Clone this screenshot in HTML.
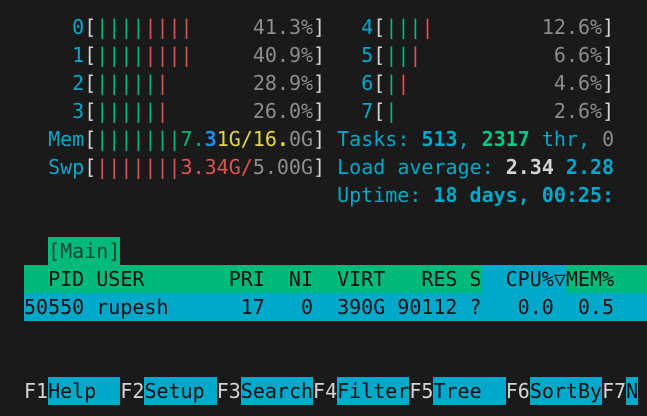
<!DOCTYPE html>
<html><head><meta charset="utf-8"><style>
html,body{margin:0;padding:0;background:#1a1a1a;width:647px;height:416px;overflow:hidden}
pre{margin:0;position:absolute;left:24px;top:13px;width:623px;overflow:hidden;font-family:"DejaVu Sans Mono","Liberation Mono",monospace;font-size:20px;line-height:28px;color:#d0d0d0;white-space:pre}
.c{color:#00a9c9}.g{color:#00b97a}.r{color:#e05252}.d{color:#8c8c8c}.w{color:#d4d4d4}.y{color:#e6d63a}.b{color:#1a90e8}.B{font-weight:bold}
.hg{background:#00b97c;color:#111}.hc{background:#00a9c9;color:#111}.tab{background:#00b97c;color:#0d4a30;display:inline-block;height:28px;vertical-align:top}
.k{color:#d4d4d4}.fb{background:#00a9c9;color:#111;display:inline-block;height:28px;vertical-align:top}
.row{display:inline-block;width:623px;height:28px;vertical-align:top}
.hc2{background:#00a9c9;display:inline-block;height:28px;vertical-align:top}
</style></head><body>
<pre><span class="c">    0</span><span class="w">[</span><span class="g">||||</span><span class="r">||||</span>     <span class="d">41.3%</span><span class="w">]</span>   <span class="c">4</span><span class="w">[</span><span class="g">|||</span><span class="r">|</span>         <span class="d">12.6%</span><span class="w">]</span>
<span class="c">    1</span><span class="w">[</span><span class="g">||||</span><span class="r">||||</span>     <span class="d">40.9%</span><span class="w">]</span>   <span class="c">5</span><span class="w">[</span><span class="g">||</span><span class="r">|</span>           <span class="d">6.6%</span><span class="w">]</span>
<span class="c">    2</span><span class="w">[</span><span class="g">|||||</span><span class="r">|</span>       <span class="d">28.9%</span><span class="w">]</span>   <span class="c">6</span><span class="w">[</span><span class="g">|</span><span class="r">|</span>            <span class="d">4.6%</span><span class="w">]</span>
<span class="c">    3</span><span class="w">[</span><span class="g">|||||</span><span class="r">|</span>       <span class="d">26.0%</span><span class="w">]</span>   <span class="c">7</span><span class="w">[</span><span class="g">|</span>             <span class="d">2.6%</span><span class="w">]</span>
<span class="c">  Mem</span><span class="w">[</span><span class="g">|||||||7.</span><span class="b B">3</span><span class="y">1G/16</span><span class="y B">.</span><span class="d">0G</span><span class="w">]</span> <span class="c">Tasks: </span><span class="c B">513</span><span class="c">, </span><span class="g B" style="color:#00c98a">2317</span><span class="c"> thr, </span><span class="d">0</span>
<span class="c">  Swp</span><span class="w">[</span><span class="r">|||||||3.34G/</span><span class="d">5.00G</span><span class="w">]</span> <span class="c">Load average: </span><span class="w B">2.34</span> <span class="c B">2.28</span>
                          <span class="c">Uptime: </span><span class="c B">18 days, 00:25:</span>

  <span class="tab">[Main]</span>
<span class="row hg">  PID USER       PRI  NI  VIRT   RES S<span class="hc2">  CPU%▽</span>MEM%</span>
<span class="row hc">50550 rupesh      17   0  390G 90112 ?   0.0  0.5</span>


<span class="k">F1</span><span class="fb">Help  </span><span class="k">F2</span><span class="fb">Setup </span><span class="k">F3</span><span class="fb">Search</span><span class="k">F4</span><span class="fb">Filter</span><span class="k">F5</span><span class="fb">Tree  </span><span class="k">F6</span><span class="fb">SortBy</span><span class="k">F7</span><span class="fb">N</span></pre>
</body></html>
